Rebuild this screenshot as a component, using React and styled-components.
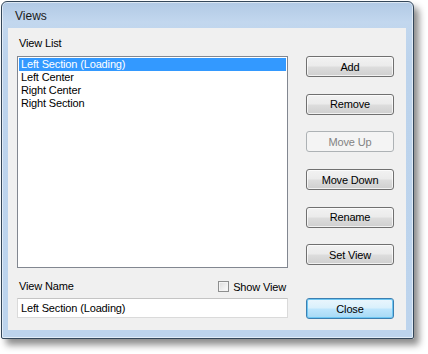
import React, { useState } from 'react';
import styled, { createGlobalStyle, css } from 'styled-components';

const Global = createGlobalStyle`
  html, body {
    margin: 0;
    padding: 0;
    background: #ffffff;
  }
  body {
    font-family: "Liberation Sans", Arial, sans-serif;
  }
`;

const Desk = styled.div`
  width: 428px;
  height: 354px;
  padding: 1px 0 0 1px;
  box-sizing: border-box;
`;

const Window = styled.div`
  width: 413px;
  height: 338px;
  box-sizing: border-box;
  border: 1px solid #34475a;
  border-radius: 6px 6px 2px 2px;
  background: linear-gradient(180deg, #b1c9e4 0px, #c2d7ee 20px, #bcd3ec 60px, #bdd4ed 100%);
  box-shadow: 5px 6px 7px rgba(0, 0, 0, 0.45), inset 0 0 0 1px rgba(255, 255, 255, 0.55);
  display: flex;
  flex-direction: column;
`;

const TitleBar = styled.div`
  height: 26px;
  display: flex;
  align-items: center;
  padding-left: 13px;
  padding-top: 1px;
  box-sizing: border-box;
  font-size: 12px;
  color: #1b1b1b;
`;

const Client = styled.div`
  margin: 0 7px 0 6px;
  height: 302px;
  background: #f0f0f0;
  display: flex;
  padding-left: 9px;
  gap: 18px;
  box-sizing: border-box;
  font-size: 11px;
  letter-spacing: -0.15px;
  color: #000;
`;

const LeftCol = styled.div`
  width: 271px;
  display: flex;
  flex-direction: column;
`;

const Label = styled.div`
  height: 13px;
  line-height: 13px;
  padding-left: 2px;
  margin-top: ${p => p.$top || 0}px;
`;

const ListBox = styled.div`
  margin-top: 6px;
  height: 212px;
  box-sizing: border-box;
  border: 1px solid #828790;
  background: #fff;
  padding: 1px;
`;

const Item = styled.div`
  height: 13px;
  line-height: 13px;
  padding-left: 2px;
  white-space: nowrap;
  ${p => p.$selected && css`
    background: #3399ff;
    color: #fff;
  `}
`;

const NameRow = styled.div`
  margin-top: 12px;
  height: 13px;
  display: flex;
  align-items: center;
  justify-content: space-between;
`;

const CheckLabel = styled.label`
  display: flex;
  align-items: center;
  gap: 4px;
  margin-right: 2px;
`;

const CheckBox = styled.span`
  width: 11px;
  height: 11px;
  box-sizing: border-box;
  border: 1px solid #8e8f8f;
  background: linear-gradient(135deg, #dcdcdc, #fdfdfd);
  box-shadow: inset 0 0 0 1px #f4f4f4;
`;

const TextField = styled.div`
  margin-top: 5px;
  height: 20px;
  box-sizing: border-box;
  border: 1px solid #dadada;
  border-top-color: #c4c4c4;
  background: #fff;
  padding-left: 3px;
  line-height: 18px;
`;

const RightCol = styled.div`
  width: 88px;
  padding-top: 28px;
  display: flex;
  flex-direction: column;
  gap: 16.7px;
`;

const Button = styled.button`
  width: 88px;
  height: 21px;
  box-sizing: border-box;
  border: 1px solid #707070;
  border-radius: 3px;
  font-family: inherit;
  font-size: 11px;
  letter-spacing: -0.15px;
  color: #000;
  padding: 0;
  background: linear-gradient(180deg, #f2f2f2 0%, #ebebeb 48%, #dddddd 52%, #cfcfcf 100%);
  box-shadow: inset 0 0 0 1px rgba(255, 255, 255, 0.7);
  ${p => p.disabled && css`
    border-color: #adb2b5;
    background: #f4f4f4;
    color: #838383;
    box-shadow: none;
  `}
  ${p => p.$default && css`
    border-color: #3c7fb1;
    background: linear-gradient(180deg, #eaf6fd 0%, #d9f0fc 48%, #bee6fd 52%, #a7d9f5 100%);
    box-shadow: inset 0 0 0 1px #6ec7f3;
  `}
`;

const CloseSlot = styled.div`
  margin-top: auto;
  margin-bottom: 11px;
`;

const views = ['Left Section (Loading)', 'Left Center', 'Right Center', 'Right Section'];

export default function App() {
  const [selected] = useState(0);
  return (
    <Desk>
      <Global />
      <Window>
        <TitleBar>Views</TitleBar>
        <Client>
          <LeftCol>
            <Label $top={9}>View List</Label>
            <ListBox>
              {views.map((v, i) => (
                <Item key={v} $selected={i === selected}>{v}</Item>
              ))}
            </ListBox>
            <NameRow>
              <Label>View Name</Label>
              <CheckLabel>
                <CheckBox />
                Show View
              </CheckLabel>
            </NameRow>
            <TextField>{views[selected]}</TextField>
          </LeftCol>
          <RightCol>
            <Button>Add</Button>
            <Button>Remove</Button>
            <Button disabled>Move Up</Button>
            <Button>Move Down</Button>
            <Button>Rename</Button>
            <Button>Set View</Button>
            <CloseSlot>
              <Button $default>Close</Button>
            </CloseSlot>
          </RightCol>
        </Client>
      </Window>
    </Desk>
  );
}
